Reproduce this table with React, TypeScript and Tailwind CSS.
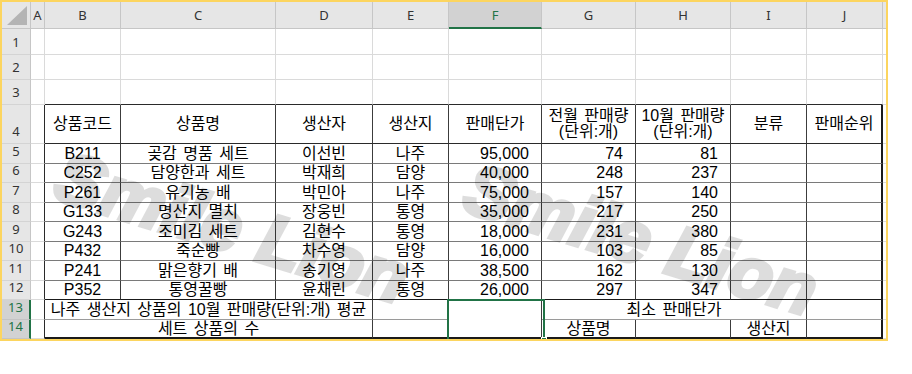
import React from 'react';

const COLS = ['A', 'B', 'C', 'D', 'E', 'F', 'G', 'H', 'I', 'J'];

const DATA = [
  ['B211', '곶감 명품 세트', '이선빈', '나주', '95,000', '74', '81'],
  ['C252', '담양한과 세트', '박재희', '담양', '40,000', '248', '237'],
  ['P261', '유기농 배', '박민아', '나주', '75,000', '157', '140'],
  ['G133', '명산지 멸치', '장웅빈', '통영', '35,000', '217', '250'],
  ['G243', '조미김 세트', '김현수', '통영', '18,000', '231', '380'],
  ['P432', '죽순빵', '차수영', '담양', '16,000', '103', '85'],
  ['P241', '맑은향기 배', '송기영', '나주', '38,500', '162', '130'],
  ['P352', '통영꿀빵', '윤채린', '통영', '26,000', '297', '347'],
];

// cell inside the bordered table
const td = 'flex items-center whitespace-nowrap border-r border-b border-r-[#3c3c3c]';
const ko = 'justify-center text-[16px] [word-spacing:2px]';
const num = 'justify-end pr-3 text-[16px]';
const grid = 'border-r border-b border-[#dadada]';

function RowHead({ n, active }: { n: number; active?: boolean }) {
  return (
    <div
      className={`flex items-end justify-center pb-[5px] text-[13px] leading-none font-['Noto_Sans',sans-serif] border-b ${
        active
          ? 'bg-[#d2d2d2] text-[#217346] border-r-2 border-r-[#217346] border-b-[#c4c4c4]'
          : 'bg-[#e6e6e6] text-[#333] border-r border-r-[#c6c6c6] border-b-[#d4d4d4]'
      }`}
    >
      {n}
    </div>
  );
}

function Watermark({ className }: { className: string }) {
  return (
    <div
      className={`pointer-events-none absolute origin-left rotate-[17deg] whitespace-nowrap text-[72px] leading-none font-bold italic text-black opacity-[0.13] [-webkit-text-stroke:4px_#000] font-['Liberation_Sans',sans-serif] ${className}`}
    >
      Smile Lion
    </div>
  );
}

export default function App() {
  return (
    <div className="bg-white w-[912px] h-[374px]">
      <div className="relative w-[888px] border-2 border-[#fcd55f] overflow-hidden font-['Liberation_Sans','Noto_Sans_CJK_KR',sans-serif] text-black leading-[18px]">
        <div className="grid grid-cols-[29px_14px_76px_155px_97px_76px_93px_94px_95px_76px_76px_3px] grid-rows-[27px_26px_25px_25px_39px_20px_19px_20px_19px_20px_19px_20px_19px_20px_19px]">
          {/* column headers */}
          <div className="relative bg-[#e6e6e6] border-r border-b border-r-[#c6c6c6] border-b-[#c6c6c6]">
            <svg className="absolute right-[3px] bottom-[3px]" width="20" height="19" viewBox="0 0 20 19">
              <polygon points="20,0 20,19 0,19" fill="#b4b4b4" />
            </svg>
          </div>
          {COLS.map((c) =>
            c === 'F' ? (
              <div
                key={c}
                className="flex items-center justify-center bg-[#d2d2d2] text-[#217346] text-[13px] font-['Noto_Sans',sans-serif] border-r border-r-[#c6c6c6] border-b-2 border-b-[#217346]"
              >
                {c}
              </div>
            ) : (
              <div
                key={c}
                className="flex items-center justify-center bg-[#e6e6e6] text-[#333] text-[13px] font-['Noto_Sans',sans-serif] border-r border-b border-r-[#c6c6c6] border-b-[#c6c6c6]"
              >
                {c}
              </div>
            )
          )}
          <div className="bg-[#e6e6e6] border-b border-b-[#c6c6c6]" />

          {/* empty rows 1-3 */}
          {[1, 2, 3].map((n) => (
            <React.Fragment key={n}>
              <RowHead n={n} />
              {COLS.map((c) =>
                n === 3 && c !== 'A' ? (
                  <div key={c} className="border-r border-b border-r-[#dadada] border-b-[#2a2a2a]" />
                ) : (
                  <div key={c} className={grid} />
                )
              )}
              <div className="border-b border-[#dadada]" />
            </React.Fragment>
          ))}

          {/* row 4: headings */}
          <RowHead n={4} />
          <div className="border-r border-b border-r-[#2a2a2a] border-b-[#dadada]" />
          <div className={`${td} ${ko} border-b-[#2a2a2a]`}>상품코드</div>
          <div className={`${td} ${ko} border-b-[#2a2a2a]`}>상품명</div>
          <div className={`${td} ${ko} border-b-[#2a2a2a]`}>생산자</div>
          <div className={`${td} ${ko} border-b-[#2a2a2a]`}>생산지</div>
          <div className={`${td} ${ko} border-b-[#2a2a2a]`}>판매단가</div>
          <div className={`${td} ${ko} border-b-[#2a2a2a] text-center leading-[16px]`}>
            전월 판매량
            <br />
            (단위:개)
          </div>
          <div className={`${td} ${ko} border-b-[#2a2a2a] text-center leading-[16px]`}>
            10월 판매량
            <br />
            (단위:개)
          </div>
          <div className={`${td} ${ko} border-b-[#2a2a2a]`}>분류</div>
          <div className="flex items-center justify-center text-[16px] border-b border-r-2 border-r-[#1a1a1a] border-b-[#2a2a2a]">
            판매순위
          </div>
          <div className="border-b border-[#dadada]" />

          {/* rows 5-12: data */}
          {DATA.map((r, i) => {
            const hb = i === DATA.length - 1 ? 'border-b-[#1a1a1a]' : 'border-b-[#7a7a7a]';
            return (
              <React.Fragment key={r[0]}>
                <RowHead n={i + 5} />
                <div className="border-r border-b border-r-[#2a2a2a] border-b-[#dadada]" />
                <div className={`${td} ${hb} justify-center text-[16px]`}>{r[0]}</div>
                <div className={`${td} ${hb} ${ko}`}>{r[1]}</div>
                <div className={`${td} ${hb} ${ko}`}>{r[2]}</div>
                <div className={`${td} ${hb} ${ko}`}>{r[3]}</div>
                <div className={`${td} ${hb} ${num}`}>{r[4]}</div>
                <div className={`${td} ${hb} ${num}`}>{r[5]}</div>
                <div className={`${td} ${hb} ${num}`}>{r[6]}</div>
                <div className={`${td} ${hb}`} />
                <div className={`border-b border-r-2 border-r-[#1a1a1a] ${hb}`} />
                <div className="border-b border-[#dadada]" />
              </React.Fragment>
            );
          })}

          {/* row 13 */}
          <RowHead n={13} active />
          <div className="border-r border-b border-r-[#2a2a2a] border-b-[#dadada]" />
          <div className={`${td} ${ko} col-span-3 border-b-[#9a9a9a]`}>나주 생산지 상품의 10월 판매량(단위:개) 평균</div>
          <div className={`${td} border-b-[#9a9a9a]`} />
          <div className="border-r border-r-[#3c3c3c]" />
          <div className={`${td} ${ko} col-span-3 border-b-[#9a9a9a]`}>최소 판매단가</div>
          <div className="border-b border-r-2 border-r-[#1a1a1a] border-b-[#9a9a9a]" />
          <div className="border-b border-[#dadada]" />

          {/* row 14 */}
          <RowHead n={14} active />
          <div className="border-r border-b border-r-[#2a2a2a] border-b-[#dadada]" />
          <div className={`${td} ${ko} col-span-3 border-b-2 border-b-[#1a1a1a]`}>세트 상품의 수</div>
          <div className={`${td} border-b-2 border-b-[#1a1a1a]`} />
          <div className={`${td} border-b-2 border-b-[#1a1a1a]`} />
          <div className={`${td} ${ko} border-b-2 border-b-[#1a1a1a]`}>상품명</div>
          <div className={`${td} border-b-2 border-b-[#1a1a1a]`} />
          <div className={`${td} ${ko} border-b-2 border-b-[#1a1a1a]`}>생산지</div>
          <div className="border-r-2 border-b-2 border-[#1a1a1a]" />
          <div className="border-b border-[#dadada]" />
        </div>

        {/* selected range F13:F14 */}
        <div className="pointer-events-none absolute left-[445px] top-[297px] w-[98px] h-[42px] border-2 border-[#217346]">
          <div className="absolute -right-[4px] -bottom-[4px] w-[6px] h-[6px] bg-[#217346] border border-white" />
        </div>

        <Watermark className="left-[56px] top-[136px]" />
        <Watermark className="left-[465px] top-[148px]" />
      </div>
    </div>
  );
}
